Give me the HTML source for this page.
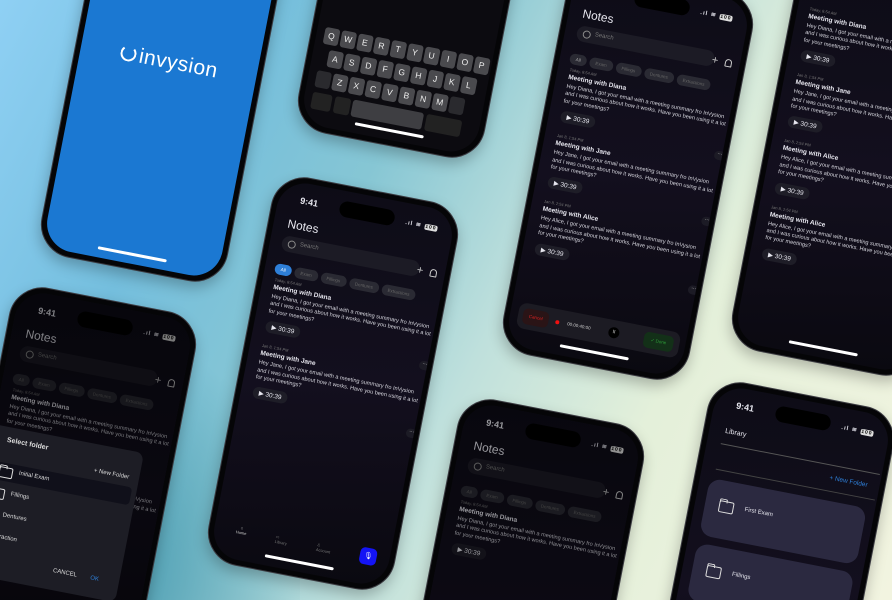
<!DOCTYPE html>
<html><head><meta charset="utf-8"><style>
*{margin:0;padding:0;box-sizing:border-box}
html{width:892px;height:600px;overflow:hidden}
body{width:892px;height:600px;overflow:hidden;position:relative;font-family:"Liberation Sans",sans-serif;
background:linear-gradient(118deg,#8fd0f4 0%,#74bedd 22%,#86c6d4 38%,#bfe0dc 55%,#e4f0da 72%,#f2f4e0 100%)}
.bgl{position:absolute;left:0;top:300px;width:300px;height:300px;background:radial-gradient(circle at 20% 90%,#3f93a8,rgba(70,150,170,0) 70%)}
.ph{position:absolute;width:190px;height:395px;border-radius:34px;background:#050507;border:1.5px solid #3a3a40;transform:rotate(11deg);box-shadow:0 6px 14px rgba(0,0,0,.25)}
.sc{position:absolute;left:5px;top:5px;right:5px;bottom:5px;border-radius:29px;overflow:hidden;background:linear-gradient(170deg,#0d0c16 0%,#130f1e 50%,#0a0910 100%);color:#e6e6ee}
.isl{position:absolute;left:62px;top:10px;width:56px;height:16px;border-radius:8px;background:#000}
.tm{position:absolute;left:22px;top:13px;font-size:9px;font-weight:bold}
.st{position:absolute;right:16px;top:16px;font-size:6px;font-weight:bold;letter-spacing:1px}
.st b{display:inline-block;background:#ddd;color:#000;border-radius:2px;padding:0 1px;font-size:5px}
.hd{position:absolute;left:14px;top:36px;font-size:12px}
.se{position:absolute;left:12px;top:55px;width:140px;height:16px;border-radius:8px;background:#1c1b25;font-size:6px;color:#777;padding:4px 0 0 18px}
.se:before{content:"";position:absolute;left:6px;top:4px;width:6px;height:6px;border:1px solid #888;border-radius:50%}
.pl{position:absolute;right:22px;top:58px;font-size:11px;color:#ccc}
.bl{position:absolute;right:8px;top:60px;width:7px;height:8px;border:1px solid #ccc;border-radius:4px 4px 1px 1px}
.ch{position:absolute;left:10px;top:78px;width:165px;height:14px;white-space:nowrap}
.ch span{display:inline-block;height:11px;border-radius:6px;background:#2a2a33;color:#666;font-size:4.5px;padding:3px 6px;margin-right:3px}
.ch span.a{background:#2e7fd8;color:#fff}
.notes{position:absolute;left:12px;top:98px;width:165px}
.n{margin-bottom:10px;position:relative}
.d{font-size:4px;color:#777;margin-bottom:2px}
.t{font-size:6.5px;font-weight:bold;margin-bottom:3px}
.b{font-size:5.6px;line-height:7.4px;color:#d4d4dc}
.p{display:inline-block;margin-top:3px;background:#1e1d27;border-radius:6px;font-size:6.5px;padding:2px 6px}
.dt{position:absolute;right:-4px;font-size:6px;color:#aaa;background:#1c1b25;border-radius:6px;width:11px;height:9px;text-align:center;line-height:5px}
.hb{position:absolute;left:55px;bottom:8px;width:70px;height:3px;border-radius:2px;background:#fff}
.dim{position:absolute;inset:0;background:rgba(0,0,0,.45)}
.k{position:absolute;display:flex;gap:2.5px}
.k i{display:block;width:14.5px;height:17px;border-radius:3px;background:#4a4a4e;color:#eee;font-style:normal;font-size:8.5px;text-align:center;line-height:17px}
.fc{position:absolute;left:10px;width:160px;height:58px;border-radius:12px;background:#2b2940}
.fi{position:absolute;width:14px;height:11px;border:1px solid #ddd;border-radius:2px}
.fi:before{content:"";position:absolute;left:-1px;top:-3px;width:6px;height:3px;border:1px solid #ddd;border-bottom:none;border-radius:2px 2px 0 0}
</style></head><body>
<div class="bgl"></div>

<!-- 1 blue -->
<div class="ph" style="left:71px;top:-122px">
 <div class="sc" style="background:#1b78d2">
  <div style="position:absolute;left:40px;top:166px;font-size:21px;color:#fff;font-weight:300;letter-spacing:.5px"><span style="display:inline-block;width:16px;height:16px;border:2.5px solid #fff;border-top-color:transparent;border-radius:50%;margin-right:3px;vertical-align:-1px"></span>invysion</div>
  <div class="hb"></div>
 </div>
</div>

<!-- 2 keyboard -->
<div class="ph" style="left:328px;top:-246px">
 <div class="sc" style="background:#0c0b10">
  <div class="k" style="left:8px;top:284px"><i>Q</i><i>W</i><i>E</i><i>R</i><i>T</i><i>Y</i><i>U</i><i>I</i><i>O</i><i>P</i></div>
  <div class="k" style="left:16px;top:306px"><i>A</i><i>S</i><i>D</i><i>F</i><i>G</i><i>H</i><i>J</i><i>K</i><i>L</i></div>
  <div class="k" style="left:8px;top:328px"><i style="background:#2a2a2e">&nbsp;</i><i>Z</i><i>X</i><i>C</i><i>V</i><i>B</i><i>N</i><i>M</i><i style="background:#2a2a2e">&nbsp;</i></div>
  <div class="k" style="left:8px;top:350px"><i style="background:#222;width:20px"></i><i style="background:#222;width:16px"></i><i style="background:#3e3e42;width:72px"></i><i style="background:#222;width:36px"></i></div>
  <div class="hb"></div>
 </div>
</div>

<!-- 3 center -->
<div class="ph" style="left:238px;top:186px">
 <div class="sc">
  <div class="isl"></div><div class="tm">9:41</div><div class="st">.ıl ≋ <b>100</b></div>
  <div class="hd">Notes</div><div class="se">Search</div><div class="pl">+</div><div class="bl"></div>
  <div class="ch"><span class="a">All</span><span>Exam</span><span>Fillings</span><span>Dentures</span><span>Extractions</span></div>
  <div class="notes">
   <div class="n"><div class="d">Today, 8:54 AM</div><div class="t">Meeting with Diana</div><div class="b">Hey Diana, I got your email with a meeting summary fro InVysion and I was curious about how it works. Have you been using it a lot for your meetings?</div><div class="p">▶ 30:39</div><div class="dt" style="bottom:-6px">...</div></div>
   <div class="n"><div class="d">Jan 8, 1:54 PM</div><div class="t">Meeting with Jane</div><div class="b">Hey Jane, I got your email with a meeting summary fro InVysion and I was curious about how it works. Have you been using it a lot for your meetings?</div><div class="p">▶ 30:39</div><div class="dt" style="bottom:-8px">...</div></div>
  </div>
  <div style="position:absolute;left:22px;top:348px;font-size:4px;color:#ccc;text-align:center">⌂<br>Home</div>
  <div style="position:absolute;left:62px;top:350px;font-size:4px;color:#777">▭<br>Library</div>
  <div style="position:absolute;left:104px;top:350px;font-size:4px;color:#777">♙<br>Account</div>
  <div style="position:absolute;left:148px;top:346px;width:17px;height:17px;border-radius:5px;background:#1414f5;color:#fff;font-size:7px;text-align:center;line-height:17px">🎙</div>
  <div class="hb"></div>
 </div>
</div>

<!-- 4 top right notes -->
<div class="ph" style="left:533px;top:-24px">
 <div class="sc">
  <div class="isl"></div><div class="tm">9:41</div><div class="st">.ıl ≋ <b>100</b></div>
  <div class="hd">Notes</div><div class="se">Search</div><div class="pl">+</div><div class="bl"></div>
  <div class="ch"><span class="a" style="background:#2a2a33;color:#aaa">All</span><span>Exam</span><span>Fillings</span><span>Dentures</span><span>Extractions</span></div>
  <div class="notes">
   <div class="n"><div class="d">Today, 8:54 AM</div><div class="t">Meeting with Diana</div><div class="b">Hey Diana, I got your email with a meeting summary fro InVysion and I was curious about how it works. Have you been using it a lot for your meetings?</div><div class="p">▶ 30:39</div><div class="dt" style="bottom:-6px">...</div></div>
   <div class="n"><div class="d">Jan 8, 1:54 PM</div><div class="t">Meeting with Jane</div><div class="b">Hey Jane, I got your email with a meeting summary fro InVysion and I was curious about how it works. Have you been using it a lot for your meetings?</div><div class="p">▶ 30:39</div><div class="dt" style="bottom:-6px">...</div></div>
   <div class="n"><div class="d">Jan 8, 2:54 PM</div><div class="t">Meeting with Alice</div><div class="b">Hey Alice, I got your email with a meeting summary fro InVysion and I was curious about how it works. Have you been using it a lot for your meetings?</div><div class="p">▶ 30:39</div><div class="dt" style="bottom:-8px">...</div></div>
  </div>
  <div style="position:absolute;left:8px;top:338px;width:164px;height:26px;border-radius:8px;background:#1c1b23">
   <div style="position:absolute;left:5px;top:5px;width:26px;height:16px;border-radius:5px;background:#2a1416;color:#e02020;font-size:4.5px;line-height:16px;text-align:center">Cancel</div>
   <div style="position:absolute;left:38px;top:11px;width:4px;height:4px;border-radius:50%;background:#f01010"></div>
   <div style="position:absolute;left:50px;top:10px;font-size:4.5px;color:#ccc">00:00:40:00</div>
   <div style="position:absolute;left:92px;top:7px;width:11px;height:11px;border-radius:50%;background:#000;color:#ddd;font-size:5px;text-align:center;line-height:11px">II</div>
   <div style="position:absolute;left:128px;top:5px;width:30px;height:16px;border-radius:5px;background:#133018;color:#2fa03a;font-size:4.5px;line-height:16px;text-align:center">✓ Done</div>
  </div>
  <div class="hb"></div>
 </div>
</div>

<!-- 5 far right -->
<div class="ph" style="left:762px;top:-28px">
 <div class="sc">
  <div class="notes" style="top:40px">
   <div class="n"><div class="d">Today, 8:54 AM</div><div class="t">Meeting with Diana</div><div class="b">Hey Diana, I got your email with a meeting summary fro InVysion and I was curious about how it works. Have you been using it a lot for your meetings?</div><div class="p">▶ 30:39</div></div>
   <div class="n"><div class="d">Jan 8, 1:54 PM</div><div class="t">Meeting with Jane</div><div class="b">Hey Jane, I got your email with a meeting summary fro InVysion and I was curious about how it works. Have you been using it a lot for your meetings?</div><div class="p">▶ 30:39</div></div>
   <div class="n"><div class="d">Jan 8, 2:54 PM</div><div class="t">Meeting with Alice</div><div class="b">Hey Alice, I got your email with a meeting summary fro InVysion and I was curious about how it works. Have you been using it a lot for your meetings?</div><div class="p">▶ 30:39</div></div>
   <div class="n"><div class="d">Jan 8, 2:54 PM</div><div class="t">Meeting with Alice</div><div class="b">Hey Alice, I got your email with a meeting summary fro InVysion and I was curious about how it works. Have you been using it a lot for your meetings?</div><div class="p">▶ 30:39</div></div>
  </div>
  <div class="hb"></div>
 </div>
</div>

<!-- 6 left bottom -->
<div class="ph" style="left:-24px;top:296px">
 <div class="sc">
  <div class="isl"></div><div class="tm">9:41</div><div class="st">.ıl ≋ <b>100</b></div>
  <div class="hd">Notes</div><div class="se">Search</div><div class="pl">+</div><div class="bl"></div>
  <div class="ch"><span>All</span><span>Exam</span><span>Fillings</span><span>Dentures</span><span>Extractions</span></div>
  <div class="notes">
   <div class="n"><div class="d">Today, 8:54 AM</div><div class="t">Meeting with Diana</div><div class="b">Hey Diana, I got your email with a meeting summary fro InVysion and I was curious about how it works. Have you been using it a lot for your meetings?</div><div class="p">▶ 30:39</div></div>
   <div class="n"><div class="d">Jan 8, 1:54 PM</div><div class="t">Meeting with Jane</div><div class="b">Hey Jane, I got your email with a meeting summary fro InVysion and I was curious about how it works. Have you been using it a lot for your meetings?</div></div>
  </div>
  <div class="dim"></div>
  <div style="position:absolute;left:-12px;top:138px;width:165px;height:152px;border-radius:8px;background:#1d1d25;color:#ddd">
   <div style="position:absolute;left:28px;top:10px;font-size:7px;font-weight:bold">Select folder</div>
   <div style="position:absolute;right:10px;top:24px;font-size:6px">+ New Folder</div>
   <div style="position:absolute;left:20px;top:36px;width:140px;height:18px;border-radius:4px;background:#10101a"></div>
   <div class="fi" style="left:26px;top:40px"></div><div style="position:absolute;left:46px;top:41px;font-size:6px">Initial Exam</div>
   <div class="fi" style="left:22px;top:62px"></div><div style="position:absolute;left:42px;top:63px;font-size:6px">Fillings</div>
   <div class="fi" style="left:18px;top:84px"></div><div style="position:absolute;left:38px;top:85px;font-size:6px">Dentures</div>
   <div style="position:absolute;left:30px;top:107px;font-size:6px">Extraction</div>
   <div style="position:absolute;left:98px;top:130px;font-size:6px">CANCEL</div>
   <div style="position:absolute;left:136px;top:130px;font-size:6px;color:#2e7fd8">OK</div>
  </div>
 </div>
</div>

<!-- 7 bottom center -->
<div class="ph" style="left:424px;top:408px">
 <div class="sc">
  <div class="isl"></div><div class="tm">9:41</div><div class="st">.ıl ≋ <b>100</b></div>
  <div class="hd">Notes</div><div class="se">Search</div><div class="pl">+</div><div class="bl"></div>
  <div class="ch"><span>All</span><span>Exam</span><span>Fillings</span><span>Dentures</span><span>Extractions</span></div>
  <div class="notes">
   <div class="n"><div class="d">Today, 8:54 AM</div><div class="t">Meeting with Diana</div><div class="b">Hey Diana, I got your email with a meeting summary fro InVysion and I was curious about how it works. Have you been using it a lot for your meetings?</div><div class="p">▶ 30:39</div></div>
  </div>
  <div class="dim" style="background:rgba(0,0,0,.35)"></div>
 </div>
</div>

<!-- 8 library -->
<div class="ph" style="left:674px;top:391px">
 <div class="sc">
  <div class="isl"></div><div class="tm">9:41</div><div class="st">.ıl ≋ <b>100</b></div>
  <div style="position:absolute;left:16px;top:42px;font-size:7px">Library</div>
  <div style="position:absolute;left:14px;top:58px;width:162px;height:1px;background:#555"></div>
  <div style="position:absolute;right:12px;top:68px;font-size:6.5px;color:#2e7fd8">+ New Folder</div>
  <div style="position:absolute;left:14px;top:84px;width:162px;height:1px;background:#444"></div>
  <div class="fc" style="top:94px"><div class="fi" style="left:14px;top:20px;width:15px;height:12px"></div><div style="position:absolute;left:40px;top:22px;font-size:6px">First Exam</div></div>
  <div class="fc" style="top:160px"><div class="fi" style="left:14px;top:20px;width:15px;height:12px"></div><div style="position:absolute;left:40px;top:22px;font-size:6px">Fillings</div></div>
  <div class="fc" style="top:226px"><div class="fi" style="left:14px;top:20px;width:15px;height:12px"></div><div style="position:absolute;left:40px;top:22px;font-size:6px">Dentures</div></div>
 </div>
</div>
</body></html>
